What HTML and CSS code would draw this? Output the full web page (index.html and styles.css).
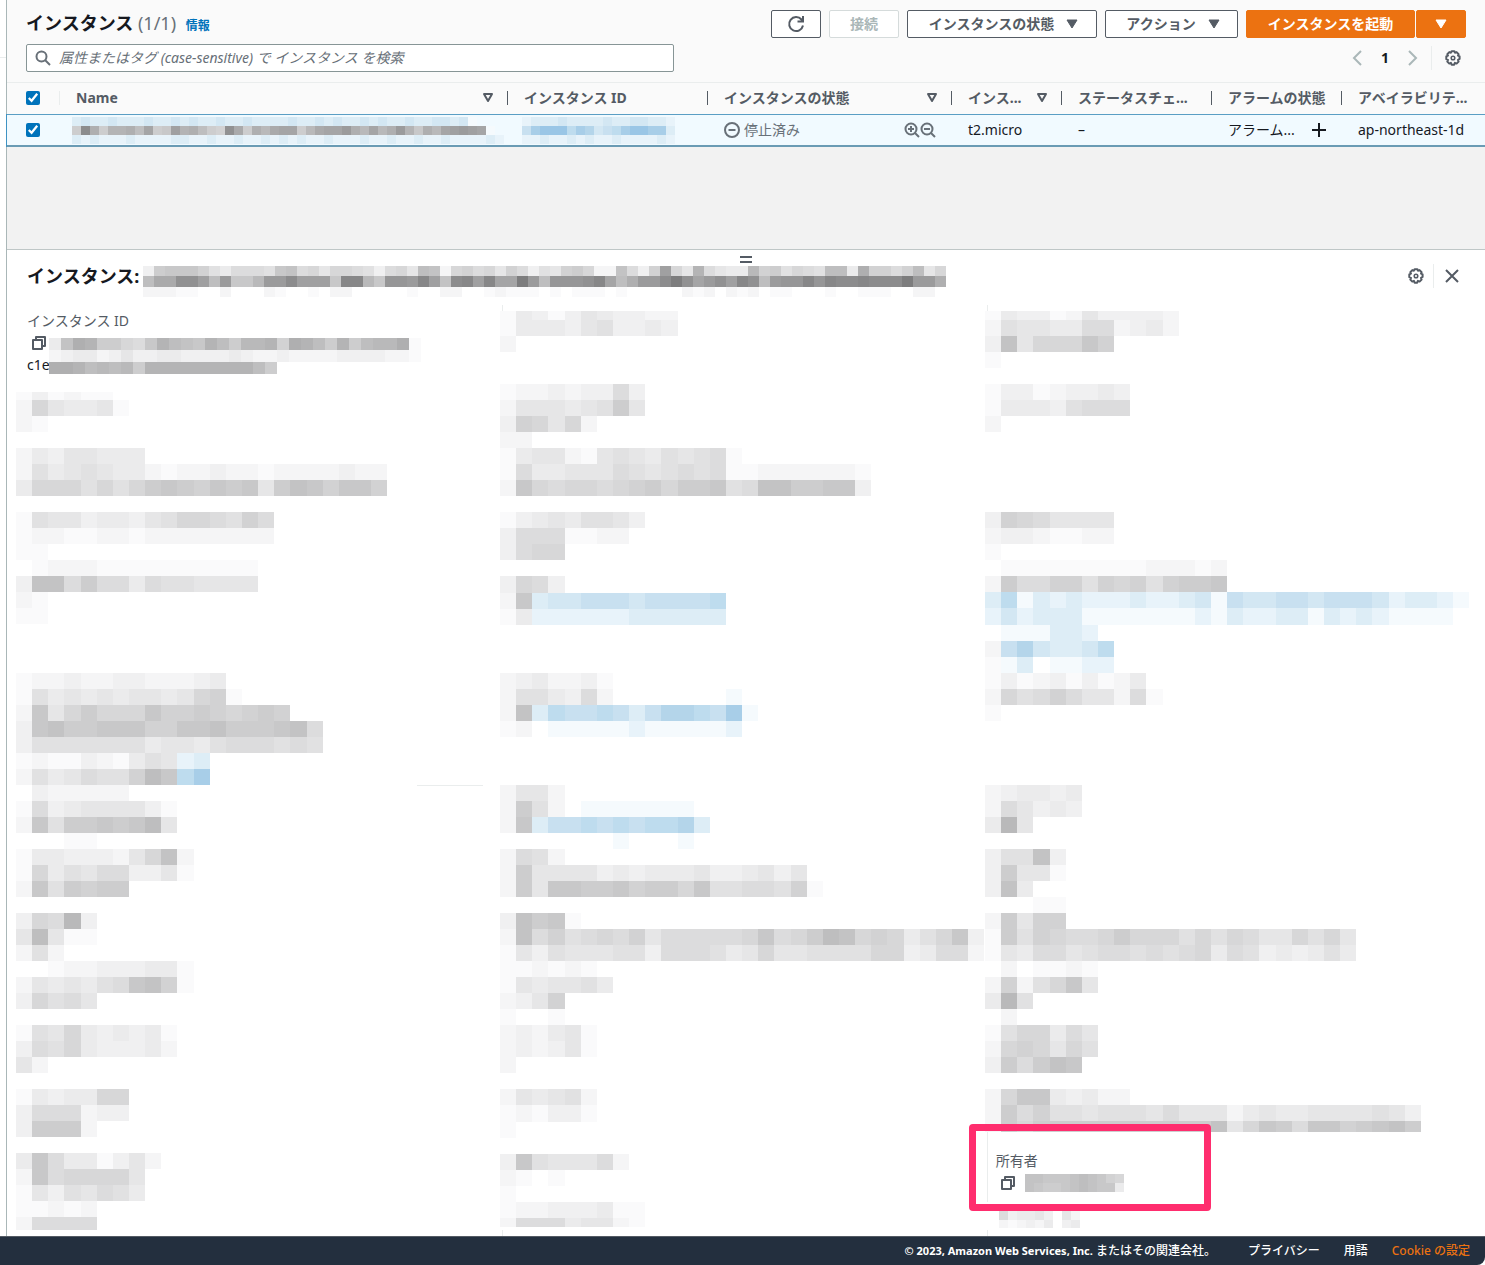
FILE: index.html
```html
<!DOCTYPE html>
<html lang="ja">
<head>
<meta charset="utf-8">
<meta name="viewport" content="width=device-width, initial-scale=1">
<title>インスタンス</title>
<link rel="stylesheet" href="styles.css">
</head>
<body>
<svg class="defs" aria-hidden="true">
  <symbol id="gear" viewBox="0 0 16 16"><path d="M6.600 1h2.800l.6 1.500 1.600-.6 2 2-.6 1.600 1.600.7v2.600l-1.600.9.6 1.700-2 2-1.700-.7-.7 1.800H6.600l-.7-1.800-1.600.7-2-2 .7-1.700L1.300 9V6.200L3 5.500l-.7-1.600 2-2 1.600.6z" transform="translate(0 .2)" fill="none" stroke="currentColor" stroke-width="2" stroke-linejoin="round"/><circle cx="8" cy="8" r="1.800" fill="none" stroke="currentColor" stroke-width="1.500"/></symbol>
  <symbol id="copy" viewBox="0 0 16 16"><path d="M2 5h9v9H2z M5 5V2h9v9h-3" fill="none" stroke="currentColor" stroke-width="2" stroke-linejoin="round"/></symbol>
  <symbol id="sort" viewBox="0 0 12 12"><path d="M2 2h8L6 9z" fill="none" stroke="currentColor" stroke-width="2" stroke-linejoin="round"/></symbol>
  <symbol id="caret" viewBox="0 0 12 12"><path d="M1 2h10L6 10z" fill="currentColor" stroke="currentColor" stroke-linejoin="round"/></symbol>
</svg>
<div class="page">
  <div class="workspace">
    <aside class="rail"></aside>
    <main class="console">
      <header class="toolbar">
        <div class="toolbar-row">
          <h1 class="title">インスタンス <span class="count">(1/1)</span> <a class="info" href="#">情報</a></h1>
          <div class="actions">
            <button class="btn btn-icon" type="button" aria-label="更新"><svg width="20" height="20" viewBox="0 0 20 20" fill="none" stroke="currentColor" stroke-width="2"><path d="M17 11.500A7 7 0 1 1 15.500 5.500L17 7M11.500 7.500h5.500V2"/></svg></button>
            <button class="btn btn-connect" type="button" disabled>接続</button>
            <button class="btn btn-state" type="button">インスタンスの状態<svg class="icon-12"><use href="#caret"/></svg></button>
            <button class="btn btn-menu" type="button">アクション<svg class="icon-12"><use href="#caret"/></svg></button>
            <div class="split">
              <button class="btn btn-primary btn-launch" type="button">インスタンスを起動</button>
              <button class="btn btn-primary btn-icon" type="button" aria-label="その他"><svg class="icon-12"><use href="#caret"/></svg></button>
            </div>
          </div>
        </div>
        <div class="toolbar-row">
          <label class="search">
            <svg width="16" height="16" viewBox="0 0 16 16" fill="none" stroke="currentColor" stroke-width="2"><circle cx="6.500" cy="6.500" r="5"/><path d="M10 10l5 5"/></svg>
            <input type="text" aria-label="検索" placeholder="属性またはタグ (case-sensitive) で インスタンス を検索">
          </label>
          <nav class="pager">
            <button class="plain faint" type="button" aria-label="前へ"><svg width="16" height="16" viewBox="0 0 16 16" fill="none" stroke="currentColor" stroke-width="2"><path d="M12 1L5 8l7 7"/></svg></button>
            <span class="page-number">1</span>
            <button class="plain faint" type="button" aria-label="次へ"><svg width="16" height="16" viewBox="0 0 16 16" fill="none" stroke="currentColor" stroke-width="2"><path d="M4 1l7 7-7 7"/></svg></button>
            <span class="divider"></span>
            <button class="plain" type="button" aria-label="設定"><svg class="icon-16"><use href="#gear"/></svg></button>
          </nav>
        </div>
      </header>
      <table class="instances">
        <colgroup><col class="c-check"><col><col class="c-id"><col class="c-state"><col class="c-type"><col class="c-status"><col class="c-alarm"><col class="c-zone"></colgroup>
        <thead>
          <tr>
            <th class="check"><div class="head light"><input type="checkbox" aria-label="すべて選択" checked></div></th>
            <th><div class="head"><span>Name</span><svg class="icon-12"><use href="#sort"/></svg></div></th>
            <th><div class="head"><span>インスタンス ID</span></div></th>
            <th><div class="head"><span>インスタンスの状態</span><svg class="icon-12"><use href="#sort"/></svg></div></th>
            <th><div class="head"><span>インス...</span><svg class="icon-12"><use href="#sort"/></svg></div></th>
            <th><div class="head"><span>ステータスチェ...</span></div></th>
            <th><div class="head"><span>アラームの状態</span></div></th>
            <th><div class="head last"><span>アベイラビリテ...</span></div></th>
          </tr>
        </thead>
        <tbody>
          <tr>
            <td class="check"><input type="checkbox" aria-label="インスタンスを選択" checked></td>
            <td class="masked"><svg class="mosaic" width="432" height="27" viewBox="0 0 48 3" data-cells="343343334334343343343333433434334343343344341.../jwpjoopmrjksopmjivqjpnqrrjnqrrtpnrnptokpnrstsr1../323222322223322322322323232232223223223223222232..."></svg></td>
            <td class="masked masked-id"><svg class="mosaic" width="153" height="27" viewBox="0 0 17 3" data-cells="23334333343344332/58999687456899883/22322323223222232"></svg></td>
            <td><div class="cell muted"><svg width="16" height="16" viewBox="0 0 16 16" fill="none" stroke="currentColor" stroke-width="2"><circle cx="8" cy="8" r="7"/><path d="M4.500 8h7"/></svg><span class="grow">停止済み</span><svg width="32" height="16" viewBox="0 0 32 16" fill="none" stroke="currentColor" stroke-width="2"><circle cx="7" cy="7" r="5.500"/><path d="M11 11l4 4M4 7h6M7 4v6"/><circle cx="23" cy="7" r="5.500"/><path d="M27 11l4 4M20 7h6"/></svg></div></td>
            <td>t2.micro</td>
            <td>–</td>
            <td><div class="cell"><span class="grow">アラーム...</span><svg width="14" height="14" viewBox="0 0 14 14" stroke="currentColor" stroke-width="2"><path d="M0 7h14M7 0v14"/></svg></div></td>
            <td>ap-northeast-1d</td>
          </tr>
        </tbody>
      </table>
      <div class="backdrop"></div>
      <section class="panel">
        <button class="handle" type="button" aria-label="サイズ変更"></button>
        <header class="panel-head">
          <h2 class="title">インスタンス:</h2>
          <svg class="mosaic" width="803" height="31" viewBox="0 0 73 3" data-cells="cjkkkifdgggfklghehhgfcghemlbhigheigcfeijhbblgcisheogeddnijfhgfmmdpiigimehj/mqqvvsmtkknttwssskxxnkuutxslwxsxrrztmuuuvxrmpttwzvrtvsxvmtuuxuxwwxwwwzttp/bbbaa..b...ba..a.bb.....a..bb..abaaa.a.aaa.a.....bab.bab.aa...a..aaa..bb"></svg>
          <span class="grow"></span>
          <button class="plain" type="button" aria-label="設定"><svg class="icon-16"><use href="#gear"/></svg></button>
          <span class="divider tight"></span>
          <button class="plain close" type="button" aria-label="閉じる"><svg width="14" height="14" viewBox="0 0 14 14" fill="none" stroke="currentColor" stroke-width="2"><path d="M1 1l12 12M13 1L1 13"/></svg></button>
        </header>
        <div class="details">
          <div class="column">
            <div class="field">
              <div class="label">インスタンス ID</div>
              <div class="value">
                <div class="value-lead"><svg class="icon-16"><use href="#copy"/></svg><span>c1e</span></div>
                <svg class="mosaic" width="372" height="36" viewBox="0 0 31 3" data-cells="dlpojjhgkomlkomjnnoipomjojmnnpa/bcddbceccddccccdcbbcbbbbccccbba/ppomnmnjooooooooomj"></svg>
              </div>
            </div>
            <svg class="mosaic fill" height="838" viewBox="0 .5 30 52.280" data-cells="acabaa/bheddea/ba//bdceeddd/bfdefeddbabbcbbabbbbcbb/dhhhfhfhjkjikjkejlkikki//afeecddcefhhgfig/abbaabbabbbbbbbb/aa/.abbbaaaaaaaaaa/cllgjggdgffeeee/ba/aa////abbcbbccbbbcd/afdededeedehia/bkehjhhhkiijihiji/ckljjkkkiikkljjjklg/cfffffffdeedfgggfgf/abaacbadfe23/bfdegffimk68/.cbbbbb/agcdeeeeca/bkfjjkjkme/...aa/addcccbehlb/ahdfeggccea/bkfjijj//chgnc/emeaa/bfb/..abbcccdda/bededfgklia/chfge//afehdcdcda/cgfhdcccdb/eb//adcddhh/cgggbcc/cjjjb//dkgddaceb/bkghhhhe/aecfegfd/aabab/bgggg"></svg>
            <hr class="section-rule">
          </div>
          <div class="column ruled">
            <svg class="mosaic fill" height="916" viewBox="0 .44 30 57.140" data-cells="adcacedccbb/adddcefccdc/b///abbcbccgc/beeedefje/cihehb/bb/adeebaefedfefga/agddeeegfefgfgaabbbbbba/bkhghhghijhjjkfglljjkkc//acdedffec/cgggaabb/cghh//chgc/bk344555455556/ad222222333333////bcdbbca/bffdcgb.......1/bl36556535776581/ab.111112111112////beeb/bjfb.1111111/bk35565656673/.......1...1/bgfb/bjeeeecdcdddeccdece/bjekkjjkijjhkffggfia//cljka/blgifghgieggggghkghjmlhihdfhkc/aecfeeeffcgggfdeheeffffhhcdggb/aababa/aedeefd/bcei/a..a/bcbdea/bcbcea/b//bedefb/abacca/a//ckfeeegb/ba.a/a/abbcccdaa/bgggdeeba"></svg>
          </div>
          <div class="column ruled">
            <svg class="mosaic fill" height="821" viewBox="0 .44 30 51.220" data-cells="adccabeccccb/bfeeddggbcdb/clehhhki/a//accabccdc/adddcfggg/b//////cihgeeee/bccbaabb/a/.aaaaaaaaabbbab/bjggiifihifijjk/361323222322341544554555423321/24233311111112132233132321111./.111332/b5743346/a13.1122/acabcacabd/bhfgigeebga/a/////bcddcd/bgecdc/dne//cfflc/cjeea/cld/...aa/bjeii/ajfihgghjhhhfhfhgeehfhe/aedggefggfgfghdgfcdcdfd/.b.aaba/bibfhke/dnf/.b/afhhdge/bhihehf/cjgjlk//bhkkdcdbb/bjgiffefffegeeebdeddeeeefec/bjhjjjjjjjjjjjlehkjgkkijklj"></svg>
            <div class="owner">
              <div class="highlight"></div>
              <div class="label">所有者</div>
              <div class="owner-value"><svg class="icon-16"><use href="#copy"/></svg><svg class="mosaic" width="99" height="18" viewBox="0 0 11 2" data-cells="llkkklmlkih/lkjjklmlkkd"></svg></div>
            </div>
            <svg class="mosaic below" width="81" height="17" viewBox="0 0 9 2" data-cells="gcddec.eb/babcbd.cd"></svg>
          </div>
        </div>
      </section>
    </main>
  </div>
  <footer class="footer">
    <span class="copyright"><span class="latin">© 2023, Amazon Web Services, Inc.</span> またはその関連会社。</span>
    <a href="#">プライバシー</a>
    <a href="#">用語</a>
    <a class="cookie" href="#">Cookie の設定</a>
  </footer>
</div>
<script src="mosaic.js"></script>
</body>
</html>
```

FILE: mosaic.js
```js
// Fills each masked area with square tiles: a-z are greys, 1-9 blues, a dot is empty.
const blues = ['#f5fafd', '#e8f3fa', '#ddedf6', '#d3e7f3', '#c8e0f0', '#bedcee', '#b4d5ea', '#a8cee8', '#9ac6e6'];

document.querySelectorAll('.mosaic').forEach((svg) => {
  svg.setAttribute('preserveAspectRatio', 'none');
  svg.dataset.cells.split('/').forEach((row, y) => {
    [...row].forEach((cell, x) => {
      const shade = 250 - 5 * (cell.charCodeAt(0) - 97);
      let fill = null;
      if (/[1-9]/.test(cell)) fill = blues[cell - 1];
      else if (/[a-z]/.test(cell)) fill = `rgb(${shade}, ${shade}, ${shade + 1})`;
      if (!fill) return;
      const tile = document.createElementNS('http://www.w3.org/2000/svg', 'rect');
      tile.setAttribute('x', x);
      tile.setAttribute('y', y);
      tile.setAttribute('width', 1);
      tile.setAttribute('height', 1);
      tile.setAttribute('fill', fill);
      svg.append(tile);
    });
  });
});
```

FILE: styles.css
```css
* { box-sizing: border-box; }
body { margin: 0; background: #fff; color: #16191f; font: 14px/20px "Noto Sans", "Noto Sans CJK JP", sans-serif; }
h1, h2 { margin: 0; }
svg { display: block; flex: none; }
button, input { font: inherit; }
a { text-decoration: none; }
.defs { position: absolute; width: 0; height: 0; }
.icon-12 { width: 12px; height: 12px; }
.icon-16 { width: 16px; height: 16px; color: #545b64; }
.btn .icon-12 { margin-right: -3px; }
.mosaic { shape-rendering: crispEdges; }
.grow { flex: 1; }

.page { min-height: 100vh; display: flex; flex-direction: column; }
.workspace { flex: 1; display: flex; }
.rail { width: 6px; background: linear-gradient(#eaeded, #eaeded) 0 57px / 100% 1px no-repeat; }
.console { flex: 1; min-width: 0; display: flex; flex-direction: column; border-left: 1px solid #aab7b8; }

.toolbar { display: flex; flex-direction: column; gap: 6px; padding: 10px 19px; background: #fafafa; border-bottom: 1px solid #eaeded; }
.toolbar-row { display: flex; align-items: center; justify-content: space-between; height: 28px; }
.title { font-size: 18px; line-height: 26px; font-weight: 700; white-space: nowrap; }
.count { font-weight: 400; color: #687078; }
.info { font-size: 12px; color: #0073bb; margin-left: 5px; }
.actions { display: flex; gap: 8px; }
.split { display: flex; gap: 1px; }
.btn { height: 28px; padding: 0; display: flex; align-items: center; justify-content: center; gap: 12px; border: 1px solid #545b64; border-radius: 2px; background: #fff; color: #545b64; font-weight: 700; white-space: nowrap; }
.btn:disabled { border-color: #d5dbdb; color: #aab7b8; }
.btn-icon { width: 50px; }
.btn-icon .icon-12 { margin: 0; }
.btn-connect { width: 70px; }
.btn-state { width: 190px; }
.btn-menu { width: 133px; }
.btn-launch { width: 169px; }
.btn-primary { border-color: #ec7211; background: #ec7211; color: #fff; }

.search { display: flex; align-items: center; gap: 8px; width: 648px; height: 28px; padding: 0 8px; border: 1px solid #879596; border-radius: 2px; background: #fff; color: #687078; }
.search input { flex: 1; min-width: 0; padding: 0; border: 0; outline: 0; background: none; }
.search input::placeholder { color: #687078; font-style: italic; opacity: 1; }
.pager { display: flex; align-items: center; }
.plain { display: flex; padding: 5px; border: 0; background: none; color: #545b64; }
.faint { color: #aab7b8; }
.page-number { width: 30px; text-align: center; font-weight: 700; }
.divider { width: 1px; height: 24px; margin: 0 8px 0 5px; background: #eaeded; }
.divider.tight { margin: 0 6px 0 4px; }

.instances { width: 100%; table-layout: fixed; border-collapse: separate; border-spacing: 0; }
.c-check { width: 53px; }
.c-id { width: 200px; }
.c-state { width: 244px; }
.c-type { width: 110px; }
.c-status { width: 150px; }
.c-alarm { width: 130px; }
.c-zone { width: 143px; }
.instances th { height: 31px; padding: 0 0 2px; background: #fafafa; color: #545b64; text-align: left; white-space: nowrap; }
.head { display: flex; align-items: center; justify-content: space-between; padding-left: 16px; }
.head span { flex: 1; }
.head::after { content: ""; width: 1px; height: 14px; margin-left: 13px; background: #545b64; }
.head.light::after { background: #eaeded; }
.head.last::after { display: none; }
.instances .head.light { padding-left: 19px; }
.instances input { display: block; width: 14px; height: 14px; margin: 0; accent-color: #0073bb; }
.instances td { height: 33px; padding: 0 16px; border-top: 1px solid #5a9ec4; border-bottom: 2px solid #6a9bb4; background: #f1faff; white-space: nowrap; }
.instances td.check { padding: 0 19px; box-shadow: -1px 0 #3f93c3; }
.instances td.masked { padding: 0 12px; }
.instances td.masked-id { padding: 0 14px; }
.cell { display: flex; align-items: center; gap: 4px; }
.muted { color: #687078; }

.backdrop { height: 102px; background: #f2f2f2; }
.panel { position: relative; flex: 1; border-top: 1px solid #bfc7c7; background: #fff; }
.handle { position: absolute; left: 50%; top: 6px; width: 12px; height: 7px; margin-left: -6px; padding: 0; border: solid #545b64; border-width: 2px 0; background: none; }
.panel-head { display: flex; align-items: center; height: 55px; padding: 7px 19px 11px 20px; }
.panel-head .mosaic { margin: 11px 0 0 4px; }
.close { padding-right: 7px; }
.details { display: grid; grid-template-columns: repeat(3, 1fr); padding: 0 16px 0 9px; }
.column { position: relative; min-width: 0; padding-top: 6px; }
.ruled::before, .ruled::after { content: ""; position: absolute; left: 2px; width: 1px; height: 6px; background: #eaeded; }
.ruled::before { top: 0; }
.ruled::after { bottom: 0; }
.fill { width: 100%; }
.field { padding: 0 0 16px 11px; }
.label { color: #545b64; }
.value { display: flex; padding-top: 1px; }
.value-lead { width: 22px; line-height: 22px; }
.value-lead svg { margin: 3px 0 3px 4px; }
.value .mosaic { margin-top: 6px; }
.section-rule { position: absolute; top: 480px; right: 17px; width: 66px; margin: 0; border: 0; border-top: 1px solid #eaeded; }
.owner { position: relative; height: 79px; padding: 19px 0 0 11px; }
.highlight { position: absolute; left: -16px; top: -8px; width: 242px; height: 87px; border: 7px solid #ff2d6e; border-radius: 4px; }
.owner::after { content: ""; position: absolute; left: 2px; top: 0; width: 1px; height: 70px; background: #eaeded; }
.owner-value { display: flex; align-items: center; gap: 9px; padding: 3px 0 0 4px; }
.below { margin: 0 0 8px 14px; }

.footer { display: flex; align-items: center; justify-content: flex-end; height: 29px; padding-right: 15px; background: #232f3e; border-top: 1px solid #545b64; border-bottom-right-radius: 8px; font-size: 12px; font-weight: 500; }
.footer a, .copyright { color: #fff; }
.copyright { font-weight: 500; margin-right: 8px; }
.latin { font-size: 11px; font-weight: 700; }
.footer a { margin-left: 24px; }
.footer .cookie { color: #ec7211; }
```
